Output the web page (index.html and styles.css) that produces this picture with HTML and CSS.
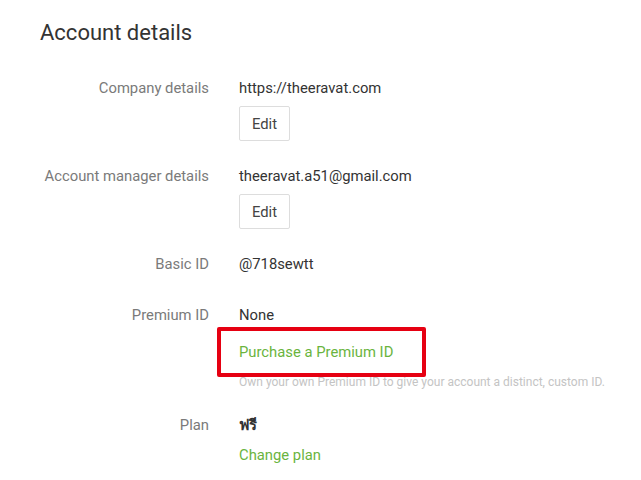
FILE: index.html
```html
<!DOCTYPE html>
<html lang="en">
<head>
    <meta charset="UTF-8">
    <meta name="viewport" content="width=device-width, initial-scale=1.0">
    <title>Account details</title>
    <link rel="stylesheet" href="styles.css">
</head>
<body>
    <h1>Account details</h1>
    <div class="details">
        <div class="row">
            <div class="label">Company details</div>
            <div class="value">
                <div class="text">https://theeravat.com</div>
                <button class="btn">Edit</button>
            </div>
        </div>
        <div class="row">
            <div class="label">Account manager details</div>
            <div class="value">
                <div class="text">theeravat.a51@gmail.com</div>
                <button class="btn">Edit</button>
            </div>
        </div>
        <div class="row row-wide">
            <div class="label">Basic ID</div>
            <div class="value">
                <div class="text">@718sewtt</div>
            </div>
        </div>
        <div class="row">
            <div class="label">Premium ID</div>
            <div class="value">
                <div class="text">None</div>
                <div class="link-wrap">
                    <a class="link" href="#">Purchase a Premium ID</a>
                    <span class="highlight"></span>
                </div>
                <div class="hint">Own your own Premium ID to give your account a distinct, custom ID.</div>
            </div>
        </div>
        <div class="row">
            <div class="label">Plan</div>
            <div class="value">
                <div class="text plan">ฟรี</div>
                <a class="link link-plan" href="#">Change plan</a>
            </div>
        </div>
    </div>
</body>
</html>
```

FILE: styles.css
```css
body {
    font-family: Roboto, "Liberation Sans", Arial, sans-serif;
    background-color: #fff;
    color: #333;
    margin: 0;
    padding: 20px 0 0 40px;
}
h1 {
    font-size: 22px;
    font-weight: 400;
    color: #333;
    margin: 0 0 33px;
    line-height: 25px;
}
.details {
    display: flex;
    flex-direction: column;
    gap: 25px;
}
.row {
    display: grid;
    grid-template-columns: 169px 1fr;
    column-gap: 30px;
    font-size: 14.8px;
    line-height: 20px;
}
.row-wide {
    margin-bottom: 6px;
}
.label {
    text-align: right;
    color: #7a7a7a;
}
.value {
    display: flex;
    flex-direction: column;
    align-items: flex-start;
}
.text {
    color: #333;
}
.btn {
    margin-top: 8px;
    width: 51px;
    height: 35px;
    font-family: inherit;
    font-size: 14.8px;
    color: #444;
    background-color: #fff;
    border: 1px solid #ddd;
    border-radius: 2px;
    padding: 0;
}
.link-wrap {
    position: relative;
    margin-top: 17px;
}
.link {
    color: #6ab43e;
    text-decoration: none;
}
.highlight {
    position: absolute;
    left: -22px;
    top: -15px;
    width: 201px;
    height: 42px;
    border: 4px solid #e60012;
    border-radius: 2px;
}
.hint {
    margin-top: 12px;
    font-size: 12px;
    line-height: 16px;
    color: #c4c4c4;
    white-space: nowrap;
}
.plan {
    font-weight: 700;
}
.link-plan {
    margin-top: 10px;
}
```
